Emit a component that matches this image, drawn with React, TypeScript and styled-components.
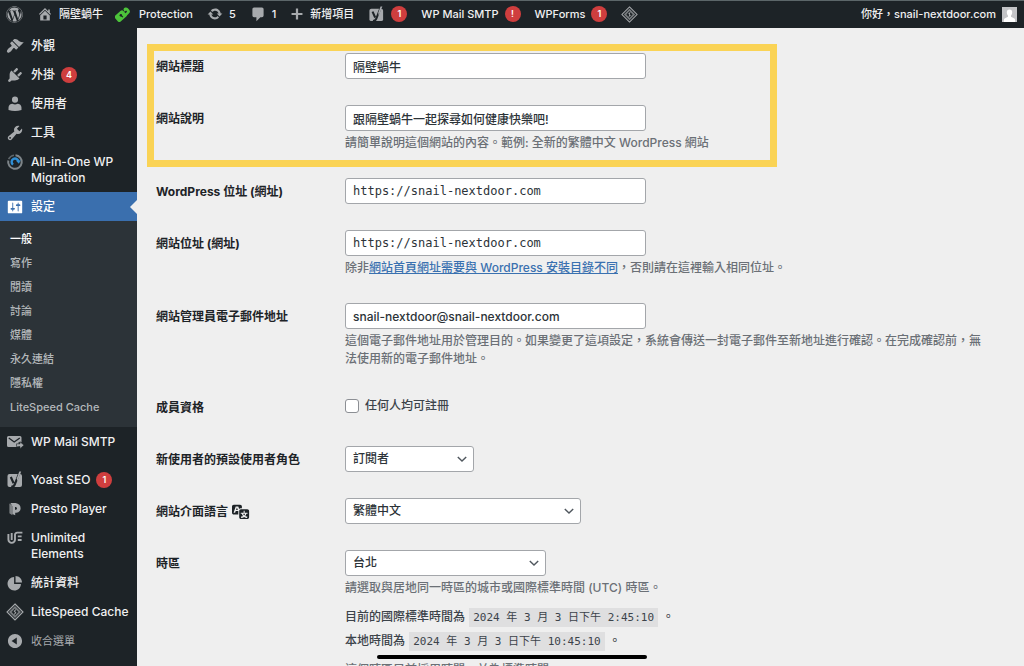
import React from "react";
import styled, { createGlobalStyle, css } from "styled-components";
import { FaWordpress } from "react-icons/fa";

const sans = `Inter, "Noto Sans CJK TC", sans-serif`;
const mono = `"DejaVu Sans Mono", "Noto Sans CJK TC", monospace`;

const GlobalStyle = createGlobalStyle`
  *, *::before, *::after { box-sizing: border-box; }
  html, body { margin: 0; background: #efefef; }
  body { font-family: ${sans}; font-size: 12px; line-height: 18px; color: #3c434a; }
  ul { list-style: none; margin: 0; padding: 0; }
  p { margin: 0; }
  a { color: inherit; text-decoration: none; }
`;

/* ---------- icons ---------- */

const Svg = styled.svg<{ $size?: number }>`
  display: block;
  flex: none;
  width: ${(p) => p.$size ?? 18}px;
  height: ${(p) => p.$size ?? 18}px;
  fill: currentColor;
`;

const glyphs = {
  appearance:
    "M14.48 11.06L7.41 3.99l1.5-1.5c.5-.56 2.3-.47 3.51.32 1.21.8 1.43 1.28 2.91 2.1 1.18.64 2.45 1.26 4.45.85zm-.71.71L6.7 4.7 4.93 6.47c-.39.39-.39 1.02 0 1.41l1.06 1.06c.39.39.39 1.03 0 1.42-.6.6-1.43 1.11-2.21 1.69-.35.26-.7.53-1.01.84C1.43 14.23.4 16.08 1.4 17.07c.99 1 2.84-.03 4.18-1.36.31-.31.58-.66.85-1.02.57-.78 1.08-1.61 1.69-2.21.39-.39 1.02-.39 1.41 0l1.06 1.06c.39.39 1.02.39 1.41 0z",
  plugins:
    "M13.11 4.36L9.87 7.6 8 5.73l3.24-3.24c.35-.34 1.05-.2 1.56.32.52.51.66 1.21.31 1.55zm-8 1.77l.91-1.12 9.01 9.01-1.19.84c-.71.71-2.63 1.16-3.82 1.16H6.14L4.9 17.26c-.59.59-1.54.59-2.12 0-.59-.58-.59-1.53 0-2.12l1.24-1.24v-3.88c0-1.13.4-3.19 1.09-3.89zm7.26 3.97l3.24-3.24c.34-.35 1.04-.21 1.55.31.52.51.66 1.21.31 1.55l-3.24 3.25z",
  users:
    "M10 1.800A3.400 3.400 0 1 1 10 8.600 3.400 3.400 0 1 1 10 1.800zM2.800 13.800C2.800 11.200 4.800 9.800 7.200 9.600 9 10.700 11 10.700 12.800 9.600 15.200 9.800 17.200 11.200 17.200 13.800V16.800C12.500 18.200 7.500 18.200 2.800 16.800z",
  tools:
    "M16.68 9.77c-1.34 1.34-3.3 1.67-4.95.99l-5.41 6.52c-.99.99-2.59.99-3.58 0s-.99-2.59 0-3.57l6.52-5.42c-.68-1.65-.35-3.61.99-4.95 1.28-1.28 3.12-1.62 4.72-1.06l-2.89 2.89 2.82 2.82 2.86-2.87c.53 1.58.18 3.39-1.08 4.65zM3.81 16.21c.4.39 1.04.39 1.43 0 .4-.4.4-1.04 0-1.43-.39-.4-1.03-.4-1.43 0-.39.39-.39 1.03 0 1.43z",
  settings:
    "M18 16V4c0-.55-.45-1-1-1H3c-.55 0-1 .45-1 1v12c0 .55.45 1 1 1h14c.55 0 1-.45 1-1zM8 11h1c.55 0 1 .45 1 1s-.45 1-1 1H8v1.5c0 .28-.22.5-.5.5s-.5-.22-.5-.5V13H6c-.55 0-1-.45-1-1s.45-1 1-1h1V5.5c0-.28.22-.5.5-.5s.5.22.5.5V11zm5-2h-1c-.55 0-1-.45-1-1s.45-1 1-1h1V5.5c0-.28.22-.5.5-.5s.5.22.5.5V7h1c.55 0 1 .45 1 1s-.45 1-1 1h-1v5.5c0 .28-.22.5-.5.5s-.5-.22-.5-.5V9z",
  pie: "M10.600 9.400V2.200c4 0 7.200 3.200 7.200 7.200h-7.200zM9 3.400v7.600h7.600c0 4.200-3.400 7.300-7.400 7.300s-7.500-3.300-7.500-7.400S5 3.400 9 3.400z",
  home: "M16 8.5l1.53 1.53-1.06 1.06L10 4.6l-6.47 6.49-1.06-1.06L10 2.5l4 4v-2h2v4zm-6-2.46l6 5.99V18H4v-5.97zM12 17v-5H8v5h4z",
  update:
    "M10.2 3.28c3.53 0 6.43 2.61 6.92 6h2.08l-3.5 4-3.5-4h2.32c-.45-1.97-2.21-3.45-4.32-3.45-1.45 0-2.73.71-3.54 1.78L4.95 5.66C6.23 4.2 8.11 3.28 10.2 3.28zm-.4 13.44c-3.52 0-6.43-2.61-6.92-6H.8l3.5-4c1.17 1.33 2.33 2.67 3.5 4H5.48c.45 1.97 2.21 3.45 4.32 3.45 1.45 0 2.73-.71 3.54-1.78l1.71 1.95c-1.28 1.46-3.15 2.38-5.25 2.38z",
  comments:
    "M5 2h10c1.1 0 2 .9 2 2v8c0 1.1-.9 2-2 2h-2l-5 5v-5H5c-1.1 0-2-.9-2-2V4c0-1.1.9-2 2-2z",
  plus: "M17.800 8.400v3.200h-6.200v6.200H8.400v-6.200H2.200V8.400h6.200V2.200h3.200v6.200z",
  collapse:
    "M10 2.16c4.33 0 7.84 3.51 7.84 7.84s-3.51 7.84-7.84 7.84S2.16 14.33 2.16 10 5.71 2.16 10 2.16zm2 11.72V6.12L6.18 9.97z",
  translation:
    "M11 7H9.49c-.63 0-1.25.3-1.59.7L7 5H4.13l-2.39 7h1.69l.74-2H7v4H2c-1.1 0-2-.9-2-2V5c0-1.1.9-2 2-2h7c1.1 0 2 .9 2 2v2zM6.51 9H4.49l1-2.93zM10 8h7c1.1 0 2 .9 2 2v7c0 1.1-.9 2-2 2h-7c-1.1 0-2-.9-2-2v-7c0-1.1.9-2 2-2zm7.25 5v-1.08h-3.17V9.75h-1.16v2.17H9.75V13h1.28c.11.85.56 1.85 1.28 2.62-.87.36-1.89.62-2.31.62-.01.02.22.97.2 1.46.84 0 2.21-.5 3.28-1.15 1.09.65 2.48 1.15 3.34 1.15-.02-.49.2-1.44.2-1.46-.43 0-1.49-.27-2.38-.63.7-.77 1.14-1.77 1.25-2.61h1.36zm-3.81 1.93c-.5-.46-.85-1.13-1.01-1.93h2.09c-.17.8-.51 1.47-1 1.93l-.04.03s-.03-.02-.04-.03z",
};

const Glyph = ({ name, size }: { name: keyof typeof glyphs; size?: number }) => (
  <Svg viewBox="0 0 20 20" $size={size} aria-hidden>
    <path d={glyphs[name]} />
  </Svg>
);

const YoastIcon = ({ size }: { size?: number }) => (
  <Svg viewBox="0 0 18 18" $size={size} aria-hidden>
    <rect x="1.500" y="3" width="14.500" height="13" rx="2" />
    <path
      d="M4.800 6L7.600 12.200M13.400 1.800L8.800 13.400C8.200 15 7.200 15.900 5.200 15.900"
      fill="none"
      stroke="#1d2327"
      strokeWidth="2.200"
    />
    <path d="M13.300 .600H15.200L11.400 10.200 10.800 7.200z" />
  </Svg>
);

const LiteSpeedIcon = ({ size }: { size?: number }) => (
  <Svg viewBox="0 0 18 18" $size={size} aria-hidden>
    <path d="M9 1L17 9 9 17 1 9z" fill="none" stroke="currentColor" strokeWidth="1.100" />
    <path d="M9 3L15 9 9 15 3 9z" opacity=".65" />
    <path d="M9 5.400L12.300 9 9 12.600 5.700 9z" fill="#1d2327" />
    <path d="M10.200 5.800L7.600 8.300 8.900 9.200 7.800 12.200 10.500 9.700 9.200 8.800z" />
  </Svg>
);

const MigrationIcon = () => (
  <Svg viewBox="0 0 18 18" aria-hidden>
    <path
      d="M9.500 2.200A6.800 6.800 0 1 1 2.300 7.500"
      fill="none"
      stroke="#7e8589"
      strokeWidth="2"
    />
    <path d="M2.600 6.200A7 7 0 0 1 8 2.200" fill="none" stroke="#5f676b" strokeWidth="1.600" />
    <path
      d="M7 11.600A3.400 3.400 0 1 1 12.400 8.400"
      fill="none"
      stroke="#2f8fd6"
      strokeWidth="2.400"
    />
    <path d="M10 7.700L14.600 7.300 12.900 10.800z" fill="#2f8fd6" />
  </Svg>
);

const MailIcon = () => (
  <Svg viewBox="0 0 18 18" aria-hidden>
    <path d="M2.500 3H14A1.500 1.500 0 0 1 15.500 4.500V9.300H12.500V14H2.500A1.500 1.500 0 0 1 1 12.500V4.500A1.500 1.500 0 0 1 2.500 3z" />
    <path
      d="M2.800 5L8.200 9 13.800 5"
      fill="none"
      stroke="#1d2327"
      strokeWidth="1.300"
    />
    <path d="M10.500 10.800H14V8.700L18 12.200 14 15.700V13.600H10.500z" stroke="#1d2327" strokeWidth=".6" />
  </Svg>
);

const PrestoIcon = () => (
  <Svg viewBox="0 0 18 18" aria-hidden>
    <path d="M3.400 3.600L6.400 5.600V15.200L3.400 13.200z" opacity=".7" />
    <path
      fillRule="evenodd"
      d="M4.400 3H9.600C12.800 3.600 14.600 5.600 14.600 8.200 14.600 11 12.400 12.800 9.200 12.800V15.200L6.400 14V6.200zM9 7V9.800C10.400 9.800 11 9.200 11 8.400 11 7.600 10.400 7 9 7z"
    />
  </Svg>
);

const UnlimitedIcon = () => (
  <Svg viewBox="0 0 18 18" aria-hidden>
    <path
      d="M2.400 5V10.600A3.300 3.300 0 0 0 9 10.600V6A2.200 2.200 0 0 1 11.200 3.600H16.400M5.700 4V11M11.800 7.400H15.600M11.800 11H15.600"
      fill="none"
      stroke="currentColor"
      strokeWidth="1.900"
    />
  </Svg>
);

const TagIcon = () => (
  <Svg viewBox="0 0 18 18" $size={16} aria-hidden>
    <g fill="#4cc33a">
      <rect x="0" y="6.800" width="12.500" height="9" rx="2.200" transform="rotate(-42 6.500 11.200)" />
      <path d="M9.500 3.600A3 3 0 0 1 14.500 2.500L16 4.200A3 3 0 0 1 15.600 8.400L12 12 10 9.800 13.600 6.400 12.600 5.200 10.600 6.400z" />
    </g>
    <circle cx="6.600" cy="10.400" r="1.400" fill="#1d2327" />
    <path d="M6.400 10.800L9 12.400" stroke="#1d2327" strokeWidth="1.200" />
  </Svg>
);

/* ---------- toolbar ---------- */

const Page = styled.div`
  display: flex;
  flex-direction: column;
  height: 100vh;
  overflow: hidden;
`;

const Toolbar = styled.header`
  flex: none;
  display: flex;
  justify-content: space-between;
  height: 28px;
  padding: 0 7px 1px 6px;
  border-top: 1px solid #5c6669;
  background: #1d2327;
  color: #f0f0f1;
  font-size: 11px;
  font-weight: 500;
`;

const ToolbarGroup = styled.nav`
  display: flex;
  gap: 14px;
`;

const ToolbarLink = styled.a`
  display: flex;
  align-items: center;
  gap: 6px;
  white-space: nowrap;
  svg {
    color: #a7aaad;
  }
`;

const ShieldLink = styled(ToolbarLink)`
  gap: 8px;
  margin-left: -2px;
`;

const Badge = styled.span`
  display: inline-flex;
  align-items: center;
  justify-content: center;
  flex: none;
  width: 16px;
  height: 16px;
  border-radius: 50%;
  background: #cf3e3e;
  color: #fff;
  font-size: 9px;
  font-weight: 600;
`;

const Avatar = styled.span`
  display: block;
  width: 15px;
  height: 15px;
  background: #c3c4c7;
  svg {
    color: #fff;
  }
`;

/* ---------- side menu ---------- */

const Body = styled.div`
  flex: 1;
  display: flex;
  min-height: 0;
`;

const SideMenu = styled.nav`
  flex: none;
  width: 137px;
  padding-top: 3px;
  background: #1d2327;
  color: #f0f0f1;
  font-weight: 500;
`;

const itemStyle = css`
  display: flex;
  gap: 7px;
  width: 100%;
  padding: 7px 4px 6px 6px;
  line-height: 16px;
  svg {
    margin: -1px 0;
    color: #a7aaad;
  }
`;

const MenuLink = styled.a<{ $current?: boolean }>`
  ${itemStyle}
  ${(p) =>
    p.$current &&
    css`
      position: relative;
      background: #3a6fae;
      color: #fff;
      svg {
        color: #fff;
      }
      &::after {
        content: "";
        position: absolute;
        right: 0;
        top: 8px;
        border: 7px solid transparent;
        border-left-width: 0;
        border-right-color: #efefef;
      }
    `}
`;

const MenuText = styled.span`
  display: flex;
  gap: 6px;
`;

const CollapseButton = styled.button`
  ${itemStyle}
  border: 0;
  background: none;
  color: #a7aaad;
  font: 400 11px/16px ${sans};
  text-align: left;
`;

const SubMenu = styled.ul`
  padding: 6px 0 8px;
  background: #2c3338;
`;

const SubLink = styled.a<{ $current?: boolean }>`
  display: block;
  padding: 0 10px;
  font-size: 11px;
  line-height: 24px;
  color: ${(p) => (p.$current ? "#fff" : "#b4b8bb")};
`;

const MenuSeparator = styled.li`
  height: 9px;
`;

/* ---------- settings form ---------- */

const Content = styled.main`
  flex: 1;
  min-width: 0;
  padding: 12px 36px 0 19px;
`;

const Highlighted = styled.div`
  position: relative;
  max-width: 612px;
  &::after {
    content: "";
    position: absolute;
    inset: 4px -9px -2px;
    border: 7px solid #fad355;
    pointer-events: none;
  }
`;

const Row = styled.div`
  display: grid;
  grid-template-columns: 189px minmax(0, 1fr);
  padding: 13px 0;
`;

const RowLabel = styled.label`
  display: flex;
  gap: 4px;
  height: 26px;
  font-weight: 700;
  line-height: 28px;
  color: #1d2327;
  svg {
    margin-top: 4px;
  }
`;

const fieldStyle = css`
  display: block;
  height: 26px;
  padding: 0 7px;
  border: 1px solid #a3a6aa;
  border-radius: 3px;
  background: #fff;
  color: #2c3338;
  font: 500 12px/24px ${sans};
`;

const TextField = styled.input<{ $code?: boolean }>`
  ${fieldStyle}
  width: 301px;
  max-width: 100%;
  ${(p) => p.$code && css`font: 400 12px/24px ${mono};`}
`;

const SelectBox = styled.div<{ $width: number }>`
  position: relative;
  width: ${(p) => p.$width}px;
  max-width: 100%;
  svg {
    position: absolute;
    right: 5px;
    top: 6px;
    fill: none;
    stroke: #50575e;
    stroke-width: 2;
    pointer-events: none;
  }
`;

const SelectField = styled.select`
  ${fieldStyle}
  width: 100%;
  appearance: none;
`;

const Help = styled.p`
  margin-top: 3px;
  color: #6b7076;
  font-weight: 500;
  a {
    color: #3a71b0;
    text-decoration: underline;
  }
`;

const CheckLine = styled.label`
  display: flex;
  align-items: center;
  gap: 6px;
  height: 24px;
  margin-bottom: 2px;
  font-weight: 500;
`;

const CheckBox = styled.input`
  appearance: none;
  width: 14px;
  height: 14px;
  margin: 0;
  border: 1px solid #8c8f94;
  border-radius: 3px;
  background: #fff;
`;

const TimeInfo = styled.div`
  margin: 8px 0;
  font-weight: 500;
  line-height: 24px;
`;

const TimeCode = styled.code`
  margin: 0 1px;
  padding: 3px 4px;
  background: #dfdfe0;
  font: 400 11px/16px ${mono};
`;

const HomeBar = styled.div`
  position: fixed;
  left: 50%;
  bottom: 7px;
  width: 270px;
  height: 4px;
  margin-left: -135px;
  border-radius: 2px;
  background: #000;
`;

const Select = ({ id, width, value }: { id: string; width: number; value: string }) => (
  <SelectBox $width={width}>
    <SelectField id={id} defaultValue={value}>
      <option>{value}</option>
    </SelectField>
    <Svg viewBox="0 0 20 20" $size={14} aria-hidden>
      <path d="M4 7l6 6 6-6" />
    </Svg>
  </SelectBox>
);

type FieldProps = {
  id: string;
  label: React.ReactNode;
  children: React.ReactNode;
};

const Field = ({ id, label, children }: FieldProps) => (
  <Row>
    <RowLabel htmlFor={id}>{label}</RowLabel>
    <div>{children}</div>
  </Row>
);

type ItemProps = {
  icon: React.ReactNode;
  badge?: string;
  current?: boolean;
  children: React.ReactNode;
};

const Item = ({ icon, badge, current, children }: ItemProps) => (
  <MenuLink href="#" $current={current}>
    {icon}
    <MenuText>
      {children}
      {badge && <Badge>{badge}</Badge>}
    </MenuText>
  </MenuLink>
);

const subPages = ["一般", "寫作", "閱讀", "討論", "媒體", "永久連結", "隱私權", "LiteSpeed Cache"];

export default function App() {
  return (
    <Page>
      <GlobalStyle />
      <Toolbar>
        <ToolbarGroup aria-label="工具列">
          <ToolbarLink href="#" aria-label="WordPress">
            <FaWordpress size={17} />
          </ToolbarLink>
          <ToolbarLink href="#">
            <Glyph name="home" size={16} />
            隔壁蝸牛
          </ToolbarLink>
          <ShieldLink href="#">
            <TagIcon />
            Protection
          </ShieldLink>
          <ToolbarLink href="#">
            <Glyph name="update" size={16} />5
          </ToolbarLink>
          <ToolbarLink href="#">
            <Glyph name="comments" size={16} />1
          </ToolbarLink>
          <ToolbarLink href="#">
            <Glyph name="plus" size={14} />
            新增項目
          </ToolbarLink>
          <ToolbarLink href="#" aria-label="Yoast SEO">
            <YoastIcon size={17} />
            <Badge>1</Badge>
          </ToolbarLink>
          <ToolbarLink href="#">
            WP Mail SMTP <Badge>!</Badge>
          </ToolbarLink>
          <ToolbarLink href="#">
            WPForms <Badge>1</Badge>
          </ToolbarLink>
          <ToolbarLink href="#" aria-label="LiteSpeed Cache">
            <LiteSpeedIcon size={17} />
          </ToolbarLink>
        </ToolbarGroup>
        <ToolbarGroup aria-label="帳號">
          <ToolbarLink href="#">
            你好，snail-nextdoor.com
            <Avatar>
              <Svg viewBox="0 0 15 15" $size={15} aria-hidden>
                <path d="M7.500 2.500C9.300 2.500 10.300 3.800 10.200 5.500 10.100 7 9.500 8 9 8.700V9.800L12.400 11.600C13 12 13.200 12.800 13.200 15H1.800C1.800 12.800 2 12 2.600 11.600L6 9.800V8.700C5.500 8 4.900 7 4.800 5.500 4.700 3.800 5.700 2.500 7.500 2.500z" />
              </Svg>
            </Avatar>
          </ToolbarLink>
        </ToolbarGroup>
      </Toolbar>

      <Body>
        <SideMenu aria-label="主選單">
          <ul>
            <li><Item icon={<Glyph name="appearance" />}>外觀</Item></li>
            <li><Item icon={<Glyph name="plugins" />} badge="4">外掛</Item></li>
            <li><Item icon={<Glyph name="users" />}>使用者</Item></li>
            <li><Item icon={<Glyph name="tools" />}>工具</Item></li>
            <li><Item icon={<MigrationIcon />}>All-in-One WP Migration</Item></li>
            <li>
              <Item icon={<Glyph name="settings" />} current>設定</Item>
              <SubMenu>
                {subPages.map((name, i) => (
                  <li key={name}>
                    <SubLink href="#" $current={i === 0}>{name}</SubLink>
                  </li>
                ))}
              </SubMenu>
            </li>
            <li><Item icon={<MailIcon />}>WP Mail SMTP</Item></li>
            <MenuSeparator aria-hidden />
            <li><Item icon={<YoastIcon />} badge="1">Yoast SEO</Item></li>
            <li><Item icon={<PrestoIcon />}>Presto Player</Item></li>
            <li><Item icon={<UnlimitedIcon />}>Unlimited Elements</Item></li>
            <li><Item icon={<Glyph name="pie" />}>統計資料</Item></li>
            <li><Item icon={<LiteSpeedIcon />}>LiteSpeed Cache</Item></li>
            <li>
              <CollapseButton type="button">
                <Glyph name="collapse" />
                收合選單
              </CollapseButton>
            </li>
          </ul>
        </SideMenu>

        <Content>
          <form>
            <Highlighted>
              <Field id="blogname" label="網站標題">
                <TextField id="blogname" type="text" defaultValue="隔壁蝸牛" />
              </Field>
              <Field id="tagline" label="網站說明">
                <TextField id="tagline" type="text" defaultValue="跟隔壁蝸牛一起探尋如何健康快樂吧!" />
                <Help>請簡單說明這個網站的內容。範例: 全新的繁體中文 WordPress 網站</Help>
              </Field>
            </Highlighted>
            <Field id="siteurl" label="WordPress 位址 (網址)">
              <TextField id="siteurl" type="url" $code defaultValue="https://snail-nextdoor.com" />
            </Field>
            <Field id="home" label="網站位址 (網址)">
              <TextField id="home" type="url" $code defaultValue="https://snail-nextdoor.com" />
              <Help>
                除非<a href="#">網站首頁網址需要與 WordPress 安裝目錄不同</a>，否則請在這裡輸入相同位址。
              </Help>
            </Field>
            <Field id="email" label="網站管理員電子郵件地址">
              <TextField id="email" type="email" defaultValue="snail-nextdoor@snail-nextdoor.com" />
              <Help>
                這個電子郵件地址用於管理目的。如果變更了這項設定，系統會傳送一封電子郵件至新地址進行確認。在完成確認前，無法使用新的電子郵件地址。
              </Help>
            </Field>
            <Field id="register" label="成員資格">
              <CheckLine>
                <CheckBox id="register" type="checkbox" />
                任何人均可註冊
              </CheckLine>
            </Field>
            <Field id="role" label="新使用者的預設使用者角色">
              <Select id="role" width={129} value="訂閱者" />
            </Field>
            <Field
              id="language"
              label={
                <>
                  網站介面語言
                  <Glyph name="translation" />
                </>
              }
            >
              <Select id="language" width={236} value="繁體中文" />
            </Field>
            <Field id="timezone" label="時區">
              <Select id="timezone" width={201} value="台北" />
              <Help>請選取與居地同一時區的城市或國際標準時間 (UTC) 時區。</Help>
              <TimeInfo>
                <p>
                  目前的國際標準時間為 <TimeCode>2024 年 3 月 3 日下午 2:45:10</TimeCode> 。
                </p>
                <p>
                  本地時間為 <TimeCode>2024 年 3 月 3 日下午 10:45:10</TimeCode> 。
                </p>
              </TimeInfo>
              <Help>這個時區目前採用時間，並為標準時間。</Help>
            </Field>
          </form>
        </Content>
      </Body>
      <HomeBar />
    </Page>
  );
}
